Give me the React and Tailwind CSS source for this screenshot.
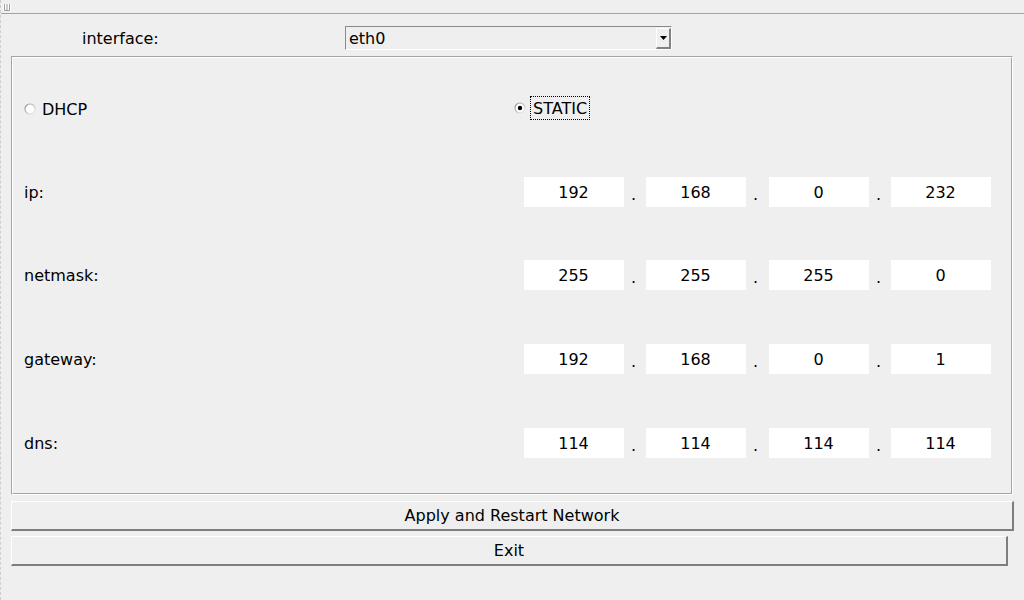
import React from 'react';

const font = { fontFamily: '"DejaVu Sans", sans-serif' };

// octetos de cada fila
const rows = [
  { label: 'ip:', vals: ['192', '168', '0', '232'], mt: 'mt-[57px]' },
  { label: 'netmask:', vals: ['255', '255', '255', '0'], mt: 'mt-[53px]' },
  { label: 'gateway:', vals: ['192', '168', '0', '1'], mt: 'mt-[54px]' },
  { label: 'dns:', vals: ['114', '114', '114', '114'], mt: 'mt-[54px]' },
];

function Radio({ checked }) {
  return (
    <svg width="12" height="12" viewBox="0 0 12 12" className="shrink-0">
      <defs>
        <linearGradient id={checked ? 'rg1' : 'rg0'} x1="0" y1="0" x2="1" y2="1">
          <stop offset="0" stopColor="#8c8c8c" />
          <stop offset="0.55" stopColor="#c8c8c8" />
          <stop offset="1" stopColor="#f4f4f4" />
        </linearGradient>
      </defs>
      <circle cx="6" cy="6" r="5" fill="#fff" stroke={`url(#${checked ? 'rg1' : 'rg0'})`} strokeWidth="1.2" />
      {checked && <circle cx="6" cy="6" r="2.2" fill="#000" />}
    </svg>
  );
}

function Octet({ value }) {
  return (
    <div className="w-[100px] h-[30px] bg-white flex items-center justify-center pt-[2px] pr-[1px] shrink-0">
      {value}
    </div>
  );
}

function Dot({ w }) {
  return <div className={`${w} h-[30px] flex items-center pl-[7px] pt-[5px] shrink-0`}>.</div>;
}

export default function App() {
  return (
    <div
      className="w-[1024px] h-[600px] bg-[#efefef] text-black text-[16px] border-l border-dashed border-l-[#cfcfcf] overflow-hidden"
      style={font}
    >
      {/* barra superior */}
      <div className="h-[14px] border-b border-b-[#a4a4a4] pl-[2px] pt-[4px]">
        <svg width="8" height="7" viewBox="0 0 8 7">
          <rect x="0" y="0" width="8" height="7" fill="#fff" />
          <path d="M1.5 0V6.5H6.5V0M4 0V6.5" fill="none" stroke="#9a9a9a" strokeWidth="1" />
        </svg>
      </div>

      {/* interface */}
      <div className="flex items-center mt-[12px] h-[24px] pl-[81px]">
        <div className="w-[263px] pt-[2px]">interface:</div>
        <div className="w-[327px] h-[24px] flex items-center border border-t-[#8a8a8a] border-l-[#8a8a8a] border-b-white border-r-white">
          <div className="flex-1 pl-[3px] pt-[2px]">eth0</div>
          <div className="w-[15px] h-[21px] flex items-center justify-center border-t border-l border-t-white border-l-white border-b-2 border-r-2 border-b-[#828282] border-r-[#828282]">
            <svg width="7" height="4" viewBox="0 0 7 4">
              <path d="M0 0H7L3.5 4Z" fill="#000" />
            </svg>
          </div>
        </div>
      </div>

      {/* marco principal */}
      <div className="ml-[10px] mt-[6px] w-[1002px] h-[439px] border border-t-[#a4a4a4] border-l-[#a4a4a4] border-b-white border-r-white">
        <div className="h-full border border-t-white border-l-white border-b-[#a4a4a4] border-r-[#a4a4a4] pl-[11px] pt-[38px] flex flex-col">
          <div className="flex items-center h-[24px]">
            <div className="w-[490px] flex items-center pt-[1px]">
              <Radio checked={false} />
              <span className="ml-[6px] pt-[2px]">DHCP</span>
            </div>
            <div className="flex items-center">
              <Radio checked />
              <span className="ml-[4px] h-[24px] px-[2px] pt-[1px] flex items-center border border-dotted border-black">
                STATIC
              </span>
            </div>
          </div>

          {rows.map((r) => (
            <div key={r.label} className={`flex items-center h-[30px] ${r.mt}`}>
              <div className="w-[500px] pt-[2px]">{r.label}</div>
              <Octet value={r.vals[0]} />
              <Dot w="w-[22px]" />
              <Octet value={r.vals[1]} />
              <Dot w="w-[23px]" />
              <Octet value={r.vals[2]} />
              <Dot w="w-[22px]" />
              <Octet value={r.vals[3]} />
            </div>
          ))}
        </div>
      </div>

      {/* botones */}
      <button className="block ml-[10px] mt-[6px] w-[1003px] h-[30px] bg-[#efefef] text-center border-t border-l border-t-white border-l-white border-b-2 border-r-2 border-b-[#7e7e7e] border-r-[#7e7e7e]">
        Apply and Restart Network
      </button>
      <button className="block ml-[10px] mt-[5px] w-[997px] h-[30px] bg-[#efefef] text-center border-t border-l border-t-white border-l-white border-b-2 border-r-2 border-b-[#7e7e7e] border-r-[#7e7e7e]">
        Exit
      </button>
    </div>
  );
}
